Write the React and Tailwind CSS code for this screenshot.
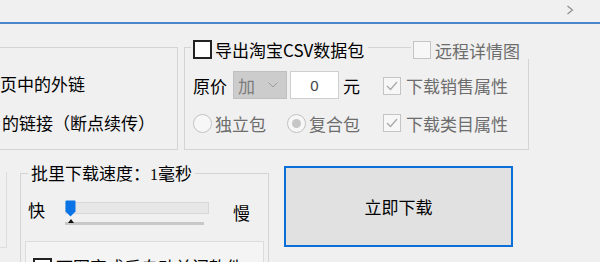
import React from 'react';

const font = "font-['Microsoft_YaHei','Noto_Sans_CJK_SC',sans-serif]";

function Check({ checked, disabled, className = '' }) {
  return (
    <span
      className={`inline-flex items-center justify-center shrink-0 ${
        disabled ? 'w-[18px] h-[18px] border border-[#c4c4c4] bg-[#f7f7f7]' : 'w-[19px] h-[19px] border-2 border-[#222] bg-white'
      } ${className}`}
    >
      {checked && (
        <svg width="14" height="14" viewBox="0 0 14 14">
          <polyline points="2,7 5.5,10.5 12,3" fill="none" stroke="#a8a8a8" strokeWidth="1.3" />
        </svg>
      )}
    </span>
  );
}

function Radio({ checked }) {
  return (
    <span className="inline-flex items-center justify-center w-[19px] h-[19px] rounded-full border border-[#c2c2c2] bg-[#f7f7f7] shrink-0">
      {checked && <span className="w-[9px] h-[9px] rounded-full bg-[#c6c6c6]" />}
    </span>
  );
}

export default function App() {
  return (
    <div className={`w-[600px] h-[262px] overflow-hidden bg-[#f0f0f0] text-[17px] leading-[17px] text-black ${font}`}>
      {/* top strip */}
      <div className="h-[22px] flex justify-end pr-[26px] pt-[5px]">
        <svg width="8" height="10" viewBox="0 0 8 10">
          <polyline points="1.5,1 6.5,5 1.5,9" fill="none" stroke="#8a8a8a" strokeWidth="1.1" />
        </svg>
      </div>
      <div className="h-[2px] bg-[#4a86cc]" />

      {/* first row of group boxes */}
      <div className="flex mt-[23px] h-[103px]">
        <div className="w-[178px] border-t border-r border-b border-[#d4d4d4] pt-[27px] flex flex-col gap-[22px]">
          <div className="whitespace-nowrap">页中的外链</div>
          <div className="whitespace-nowrap ml-[2px]">的链接（断点续传）</div>
        </div>

        <div className="relative ml-[6px] w-[345px] border border-[#d4d4d4] pt-[23px] pl-[8px]">
          <div className="absolute left-[6px] top-[-8px] flex items-center gap-[3px] bg-[#f0f0f0] pl-[2px] pr-[4px]">
            <Check />
            <span className="whitespace-nowrap">导出淘宝CSV数据包</span>
          </div>
          <div className="absolute left-[226px] top-[-7px] flex items-center gap-[4px] bg-[#f0f0f0] pl-[2px] pr-[10px] text-[#6d6d6d]">
            <Check disabled />
            <span className="whitespace-nowrap">远程详情图</span>
          </div>

          <div className="flex items-center h-[28px]">
            <div className="w-[190px] flex items-center">
              <span>原价</span>
              <div className="ml-[6px] w-[54px] h-[28px] bg-[#cccccc] border border-[#c0c0c0] flex items-center pl-[4px] text-[#7c7c7c]">
                <span>加</span>
                <svg className="ml-[13px]" width="10" height="6" viewBox="0 0 10 6">
                  <polyline points="0.5,0.5 5,5 9.5,0.5" fill="none" stroke="#9a9a9a" strokeWidth="1" />
                </svg>
              </div>
              <div className="ml-[3px] w-[49px] h-[28px] bg-white border border-[#cfcfcf] flex items-center justify-center text-[#444] font-['Liberation_Sans',sans-serif] text-[15px]">
                0
              </div>
              <span className="ml-[4px]">元</span>
            </div>
            <div className="flex items-center gap-[5px] text-[#6d6d6d] mt-[1px]">
              <Check checked disabled />
              <span className="whitespace-nowrap">下载销售属性</span>
            </div>
          </div>

          <div className="flex items-center h-[28px] mt-[10px]">
            <div className="w-[190px] flex items-center text-[#6d6d6d]">
              <Radio />
              <span className="ml-[3px]">独立包</span>
              <span className="ml-[21px] flex items-center">
                <Radio checked />
                <span className="ml-[3px]">复合包</span>
              </span>
            </div>
            <div className="flex items-center gap-[5px] text-[#6d6d6d]">
              <Check checked disabled />
              <span className="whitespace-nowrap">下载类目属性</span>
            </div>
          </div>
        </div>
      </div>

      {/* second row */}
      <div className="flex items-start">
        <div className="w-[7px] h-[76px] mt-[22px] border-r border-b border-[#dddddd]" />

        <div className="relative ml-[13px] mt-[23px] w-[249px] h-[120px] border border-[#d4d4d4]">
          <div className="absolute left-[7px] top-[-10px] bg-[#f0f0f0] px-[3px] whitespace-nowrap">
            批里下载速度：<span className="font-['Liberation_Serif',serif] text-[16px]">1</span>毫秒
          </div>

          <div className="flex items-start mt-[26px] pl-[7px] h-[27px]">
            <span className="mt-[1px]">快</span>
            <div className="relative ml-[20px] w-[144px] h-[27px]">
              <div className="absolute left-0 top-[2px] w-[144px] h-[12px] bg-[#e7e7e7] border border-[#d8d8d8]" />
              <div className="absolute left-0 top-[22px] w-[139px] h-[3px] bg-[#c8c8c8]" />
              <svg className="absolute left-[3px] top-[19px]" width="6" height="4" viewBox="0 0 6 4">
                <polygon points="0,4 3,0 6,4" fill="#111" />
              </svg>
              <svg className="absolute left-0 top-0" width="11" height="17" viewBox="0 0 11 17">
                <path d="M0.5 1.5 Q0.5 0.5 1.5 0.5 H9.5 Q10.5 0.5 10.5 1.5 V11.5 L5.5 16.5 L0.5 11.5 Z" fill="#0a74e6" />
              </svg>
            </div>
            <span className="ml-[24px] mt-[4px]">慢</span>
          </div>

          <div className="ml-[4px] mt-[14px] w-[239px] h-[60px] border border-[#dcdcdc] bg-[#f4f4f4] pt-[16px] pl-[7px] flex items-start gap-[4px]">
            <Check />
            <span className="whitespace-nowrap">下图完成后自动关闭软件</span>
          </div>
        </div>

        <button className="ml-[15px] mt-[16px] w-[229px] h-[81px] border-2 border-[#0a6fd8] bg-[#e1e1e1] flex items-center justify-center text-[17px]">
          立即下载
        </button>
      </div>
    </div>
  );
}
